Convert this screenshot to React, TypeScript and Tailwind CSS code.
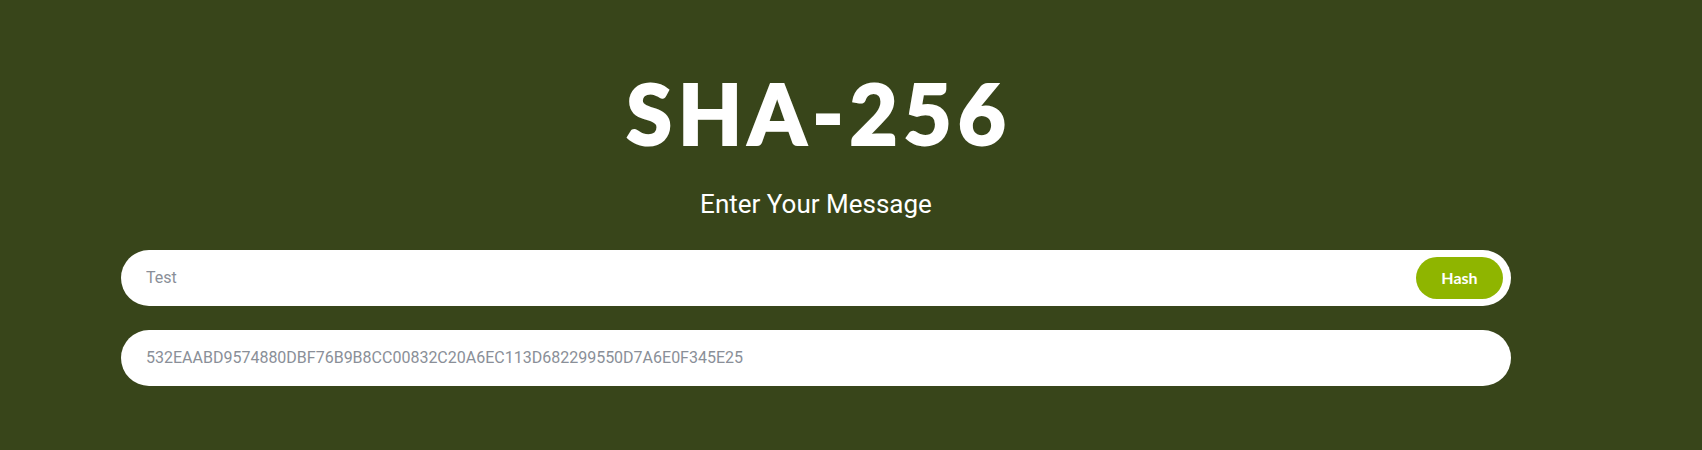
export default function App() {
  return (
    <div className="min-h-[450px] w-full bg-[#38451a] pl-[121px] pr-[191px] pt-[68px]" style={{ fontFamily: 'Roboto, sans-serif' }}>
      <div className="flex flex-col items-center">
        <h1
          className="pl-[6px] text-[83px] leading-[90px] font-black tracking-[6px] text-white [-webkit-text-stroke:2px_white]"
          style={{ fontFamily: 'Lato, sans-serif' }}
        >
          SHA-256
        </h1>
        <p className="mt-[31px] text-[26px] leading-[30px] text-white">Enter Your Message</p>
      </div>
      <div className="mt-[31px] flex h-[56px] items-center rounded-full bg-white pl-[25px] pr-[8px]">
        <input
          className="flex-1 bg-transparent text-[16px] text-[#8a8f98] outline-none placeholder:text-[#8a8f98]"
          placeholder="Test"
        />
        <button
          className="h-[42px] w-[87px] rounded-full bg-[#8fb500] text-[16px] font-bold text-white"
          style={{ fontFamily: 'Lato, sans-serif' }}
        >
          Hash
        </button>
      </div>
      <div className="mt-[24px] flex h-[56px] items-center rounded-full bg-white pl-[25px]">
        <span className="text-[16px] text-[#8a8f98]">532EAABD9574880DBF76B9B8CC00832C20A6EC113D682299550D7A6E0F345E25</span>
      </div>
    </div>
  );
}
